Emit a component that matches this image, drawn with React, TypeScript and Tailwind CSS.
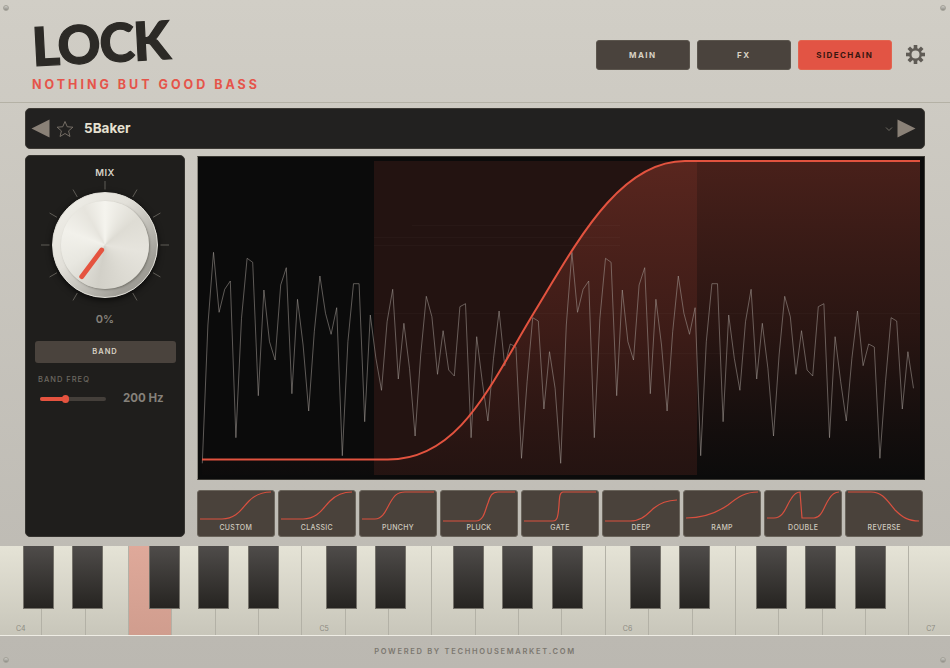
const RED = "#e2533f";

// One period of the analyser trace, sampled from the picture. It repeats twice.
const WAVE = [
	925, 510, 292, 472, 403, 378, 848, 490, 310, 322, 722, 405, 560, 615, 390, 338,
	716, 433, 570, 768, 530, 363, 475, 538, 458, 902, 560, 386, 386, 800, 480, 610,
	706, 500, 403, 672, 505, 640, 843, 600, 424, 485, 658, 527, 645, 663, 455, 446,
	848, 545, 680, 798, 610, 468, 632, 567, 576, 910, 680, 488, 498, 762, 590, 700,
];

const wavePoints = [...WAVE, ...WAVE]
	.map((v, i) => `${(202.3 + i * 5.6).toFixed(1)},${(155 + v / 3).toFixed(1)}`)
	.join(" ");

const CURVE =
	"M202,459.5 L388,459.5 C460,459.5 490,385 535,311 C578,240 620,161 685,161 L920,161";

const PRESETS = [
	{ name: "CUSTOM", d: "M3,29 H25 C40,29 45,18 52,11 C58,5 65,2 74,2" },
	{ name: "CLASSIC", d: "M3,29 H25 C40,29 45,18 52,11 C58,5 65,2 74,2" },
	{ name: "PUNCHY", d: "M3,29 H16 C24,29 27,20 31,13 C35,6 38,2 46,2 H75" },
	{ name: "PLUCK", d: "M3,31 H36 C44,31 45,20 48,13 C50,6 52,2 58,2 H75" },
	{ name: "GATE", d: "M3,31 H32 C36,31 37,28 38,15 C38.5,6 39,2 42,2 H75" },
	{ name: "DEEP", d: "M3,31 H28 C40,31 45,24 52,18 C58,13 64,10.5 75,10" },
	{ name: "RAMP", d: "M3,28 C20,28 32,24 45,15 C55,7 62,2 75,2" },
	{ name: "DOUBLE", d: "M3,28 H10 C20,28 22,16 27,9 C30,4 33,2 36,2 L38,28 H50 C58,28 60,16 65,9 C68,4 71,2 75,2" },
	{ name: "REVERSE", d: "M3,2 H26 C38,2 43,12 50,20 C57,27 63,31 74,31" },
];

// Black key hanging off the right edge of each white key, one octave
const BLACK_KEYS = [
	"right-[-12.4px]",
	"right-[-18px]",
	"",
	"right-[-9px]",
	"right-[-14.6px]",
	"right-[-21.4px]",
	"",
];

const LABELS: Record<number, string> = { 0: "C4", 7: "C5", 14: "C6", 21: "C7" };

function Screw({ className }: { className: string }) {
	return (
		<div
			className={`absolute h-[6px] w-[6px] rounded-full border border-[#a3a198] bg-[linear-gradient(180deg,#cfcec8,#8d8b85)] ${className}`}
		/>
	);
}

function Gear() {
	const teeth = [0, 45, 90, 135, 180, 225, 270, 315];
	return (
		<svg width="19" height="19" viewBox="0 0 19 19">
			{teeth.map((a) => (
				<rect key={a} x="7.7" y="0" width="3.6" height="4" fill="#5f5b55" transform={`rotate(${a} 9.5 9.5)`} />
			))}
			<circle cx="9.5" cy="9.5" r="5.2" fill="none" stroke="#5f5b55" strokeWidth="2.4" />
		</svg>
	);
}

function Knob() {
	const ticks = [-150, -120, -90, -60, -30, 0, 30, 60, 90, 120, 150];
	return (
		<div className="relative mt-px flex h-[130px] w-[130px] items-center justify-center">
			<div className="flex h-[106px] w-[106px] items-center justify-center rounded-full border border-[#e4e2db] bg-[linear-gradient(135deg,#f3f2ec_0%,#e2e0d9_40%,#a09e97_80%,#9a9891_100%)] shadow-[0_2px_6px_rgba(0,0,0,0.7)]">
				<div className="h-[88px] w-[88px] rounded-full bg-[conic-gradient(#f5f4ee_0deg,#dedcd4_50deg,#e6e4dd_100deg,#dcdad2_150deg,#d2d0c8_190deg,#e8e7e0_240deg,#f2f1eb_290deg,#e6e4dd_330deg,#f5f4ee_360deg)] shadow-[1px_1px_2px_rgba(90,88,80,0.6)]" />
			</div>
			<svg className="absolute inset-0" width="130" height="130" viewBox="0 0 130 130">
				{ticks.map((a) => {
					const r = (a * Math.PI) / 180;
					return (
						<line
							key={a}
							x1={65 + 55.5 * Math.sin(r)}
							y1={65 - 55.5 * Math.cos(r)}
							x2={65 + 64 * Math.sin(r)}
							y2={65 - 64 * Math.cos(r)}
							stroke="#5f5c56"
							strokeWidth="1"
						/>
					);
				})}
				<line x1="61.7" y1="70" x2="41.7" y2="96.7" stroke="#e5533f" strokeWidth="4.8" strokeLinecap="round" />
			</svg>
		</div>
	);
}

function Display() {
	return (
		<div className="h-[324px] border border-[#3a3833] border-l-[#8b887f] bg-[#0b0b0b]">
			<svg className="block" width="726" height="322" viewBox="198 157 726 322">
				<defs>
					<linearGradient id="fill" x1="0" y1="161" x2="0" y2="475" gradientUnits="userSpaceOnUse">
						<stop offset="0" stopColor="#d2503c" stopOpacity="0.31" />
						<stop offset="0.55" stopColor="#c24a38" stopOpacity="0.16" />
						<stop offset="1" stopColor="#a04030" stopOpacity="0.01" />
					</linearGradient>
				</defs>
				<rect x="374" y="161" width="323" height="314" fill="#c8503c" fillOpacity="0.13" />
				<path d={`${CURVE} L920,475 L202,475 Z`} fill="url(#fill)" />
				<g stroke="#ffffff" strokeOpacity="0.025">
					<line x1="412" y1="225.5" x2="620" y2="225.5" />
					<line x1="374" y1="237.5" x2="620" y2="237.5" />
					<line x1="374" y1="245.5" x2="620" y2="245.5" />
					<line x1="374" y1="313.5" x2="920" y2="313.5" />
					<line x1="425" y1="353.5" x2="760" y2="353.5" />
				</g>
				<polyline points={wavePoints} fill="none" stroke="#a8a29c" strokeOpacity="0.52" strokeWidth="1" />
				<path d={CURVE} fill="none" stroke={RED} strokeWidth="2" />
			</svg>
		</div>
	);
}

export default function App() {
	return (
		<div className="relative flex h-[668px] w-[950px] flex-col overflow-hidden bg-[linear-gradient(180deg,#d1cec6,#bbb8b1)] font-['Inter',sans-serif]">
			<Screw className="left-[3px] top-[5px]" />
			<Screw className="right-[4px] top-[5px]" />
			<Screw className="bottom-[5px] left-[3px]" />
			<Screw className="bottom-[5px] right-[4px]" />

			{/* Header */}
			<header className="flex h-[103px] shrink-0 justify-between border-b border-[#b4b1a5] pl-[32px] pr-[25px]">
				<div>
					<h1 className="mt-[16px] origin-left -rotate-[3deg] font-['Lato',sans-serif] text-[53px] font-black leading-[60px] tracking-[-1px] text-[#2c2a26] [-webkit-text-stroke:1.2px_#2c2a26]">
						LOCK
					</h1>
					<p className="mt-[2px] text-[12.5px] font-bold leading-[14px] tracking-[3px] text-[#e5544a]">
						NOTHING BUT GOOD BASS
					</p>
				</div>
				<div className="mt-[40px] flex h-[29.5px] items-center">
					<div className="flex gap-[6.5px]">
						<button className="h-[29.5px] w-[94.5px] rounded-[3px] border border-[#5b554d] bg-[#4a433d] text-[8px] font-bold tracking-[1.4px] text-[#d8d2c4]">
							MAIN
						</button>
						<button className="h-[29.5px] w-[94.5px] rounded-[3px] border border-[#5b554d] bg-[#4a433d] text-[8px] font-bold tracking-[1.4px] text-[#d8d2c4]">
							FX
						</button>
						<button className="h-[29.5px] w-[94.5px] rounded-[3px] border border-[#e2644f] bg-[#e25444] text-[8px] font-bold tracking-[1.4px] text-[#36160f]">
							SIDECHAIN
						</button>
					</div>
					<div className="ml-[14px]">
						<Gear />
					</div>
				</div>
			</header>

			{/* Preset bar */}
			<div className="mx-[25px] mt-[5px] flex h-[41px] shrink-0 items-center rounded-[5px] border border-[#3d3a35] bg-[#222120] pl-[5px] pr-[8px]">
				<svg width="19" height="19" viewBox="0 0 19 19">
					<polygon points="0.5,9.5 18.5,0.5 18.5,18.5" fill="#8a8177" />
				</svg>
				<svg className="ml-[6px]" width="18" height="18" viewBox="0 0 24 24">
					<polygon
						points="12,2 15,9 22.5,9.6 16.8,14.5 18.6,22 12,18 5.4,22 7.2,14.5 1.5,9.6 9,9"
						fill="none"
						stroke="#7d756c"
						strokeWidth="1.2"
					/>
				</svg>
				<span className="ml-[10px] text-[13.5px] font-bold text-[#e6e0d1]">5Baker</span>
				<svg className="ml-auto" width="8" height="6" viewBox="0 0 8 6">
					<polyline points="1,1.5 4,4.5 7,1.5" fill="none" stroke="#6f6b63" strokeWidth="1" />
				</svg>
				<svg className="ml-[4px]" width="19" height="19" viewBox="0 0 19 19">
					<polygon points="18.5,9.5 0.5,0.5 0.5,18.5" fill="#8a8177" />
				</svg>
			</div>

			<div className="mx-[25px] mt-[6px] flex gap-[12px]">
				{/* Left panel */}
				<div className="flex h-[382px] w-[160px] shrink-0 flex-col items-center rounded-[5px] border border-[#35332f] bg-[#1f1e1c] pt-[11px]">
					<div className="text-[9.5px] font-semibold leading-[12px] tracking-[0.5px] text-[#d6d2c6]">MIX</div>
					<Knob />
					<div className="mt-[2px] text-[11px] font-semibold leading-[14px] text-[#85817a]">0%</div>
					<button className="mt-[15px] h-[22px] w-[141px] rounded-[3px] bg-[#4a433d] text-[7.5px] font-semibold tracking-[1px] text-[#d8d2c4]">
						BAND
					</button>
					<div className="mt-[12px] w-full pl-[12px] text-[7.5px] font-medium leading-[10px] tracking-[1px] text-[#6c6860]">
						BAND FREQ
					</div>
					<div className="mt-[7px] flex h-[14px] w-full items-center pl-[14px]">
						<div className="relative h-[3.5px] w-[66px] rounded-full bg-[#443f3a]">
							<div className="h-full w-[25px] rounded-full bg-[#e5533f]" />
							<div className="absolute left-[21.5px] top-[-2px] h-[7.5px] w-[7.5px] rounded-full bg-[#e5533f]" />
						</div>
						<span className="ml-[17px] text-[11.5px] font-bold text-[#85817a]">200 Hz</span>
					</div>
				</div>

				{/* Display + curve presets */}
				<div className="w-[728px] pt-px">
					<Display />
					<div className="mt-[10px] grid w-[726px] grid-cols-9 gap-[3.5px]">
						{PRESETS.map((p) => (
							<div
								key={p.name}
								className="flex h-[47px] flex-col items-center rounded-[3px] border border-[#6a645b] bg-[#4a423b]"
							>
								<svg className="block shrink-0" width="76" height="32" viewBox="1 1 76 32">
									<path d={p.d} fill="none" stroke="#d9503f" strokeWidth="1.2" />
								</svg>
								<span className="text-[7px] font-medium leading-[9px] tracking-[0.3px] text-[#cfcabf]">{p.name}</span>
							</div>
						))}
					</div>
				</div>
			</div>

			{/* Keyboard */}
			<div className="mt-[9px] h-[90px] shrink-0 overflow-hidden border-b border-[#efede5]">
				<div className="ml-[-1px] flex h-full w-[953.5px]">
					{Array.from({ length: 22 }, (_, i) => (
						<div
							key={i}
							className={`relative flex flex-1 items-end border-r border-[#b3b1a6] pb-[2px] pl-[17px] ${
								i === 3
									? "bg-[linear-gradient(180deg,#dfa99a,#d09d8e)]"
									: "bg-[linear-gradient(180deg,#e5e3d6,#c8c6ba)]"
							}`}
						>
							<span className="text-[7px] leading-[9px] text-[#8c8a81]">{LABELS[i]}</span>
							{i < 21 && BLACK_KEYS[i % 7] && (
								<div
									className={`absolute top-0 z-10 h-[63px] w-[31px] border-x border-b border-[#75726a] bg-[linear-gradient(180deg,#4f4c4a,#262421)] ${BLACK_KEYS[i % 7]}`}
								/>
							)}
						</div>
					))}
				</div>
			</div>

			{/* Footer */}
			<footer className="flex flex-1 items-center justify-center">
				<span className="text-[7.5px] font-semibold tracking-[1.7px] text-[#7b776f]">
					POWERED BY TECHHOUSEMARKET.COM
				</span>
			</footer>
		</div>
	);
}
